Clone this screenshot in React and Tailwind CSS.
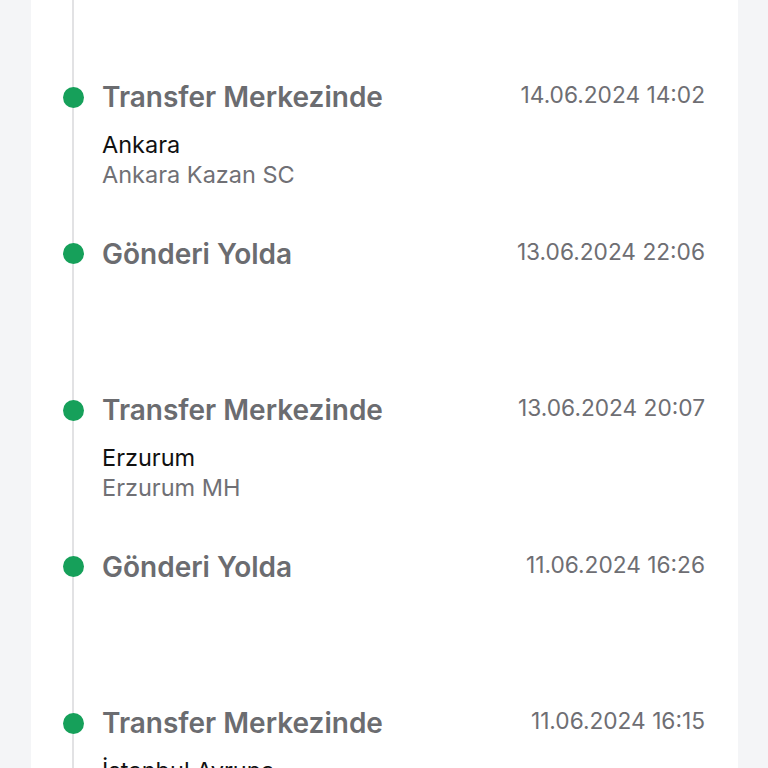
import React from "react";

const items = [
  { title: "Transfer Merkezinde", date: "14.06.2024 14:02", city: "Ankara", place: "Ankara Kazan SC" },
  { title: "Gönderi Yolda", date: "13.06.2024 22:06" },
  { title: "Transfer Merkezinde", date: "13.06.2024 20:07", city: "Erzurum", place: "Erzurum MH" },
  { title: "Gönderi Yolda", date: "11.06.2024 16:26" },
  { title: "Transfer Merkezinde", date: "11.06.2024 16:15", city: "İstanbul Avrupa", place: "İstanbul Avrupa TM" },
];

export default function App() {
  return (
    <div
      className="w-[768px] h-[768px] overflow-hidden bg-[#f4f5f7]"
      style={{ fontFamily: "Inter, 'Noto Sans', sans-serif" }}
    >
      <div className="ml-[31px] w-[707px] h-full bg-white relative">
        <div className="absolute left-[41px] top-0 bottom-0 w-[2px] bg-[#e2e2e4]" />
        <div className="pt-[81px] pr-[33px]">
          {items.map((it, i) => (
            <div key={i} className="h-[156.5px] flex flex-col">
              <div className="flex items-start">
                <div className="w-[71px] h-[32px] flex items-center justify-start pl-[32px] relative">
                  <div className="w-[21px] h-[21px] rounded-full bg-[#16a05a]" />
                </div>
                <div className="flex-1 text-[28px] leading-[32px] font-semibold text-[#6b6c70]">{it.title}</div>
                <div className="text-[22.7px] leading-[28px] text-[#6e6e73]">{it.date}</div>
              </div>
              {it.city && (
                <div className="pl-[71px] mt-[17px]">
                  <div className="text-[23.5px] leading-[30px] text-[#111111]">{it.city}</div>
                  <div className="text-[23.5px] leading-[30px] text-[#707075]">{it.place}</div>
                </div>
              )}
            </div>
          ))}
        </div>
      </div>
    </div>
  );
}
